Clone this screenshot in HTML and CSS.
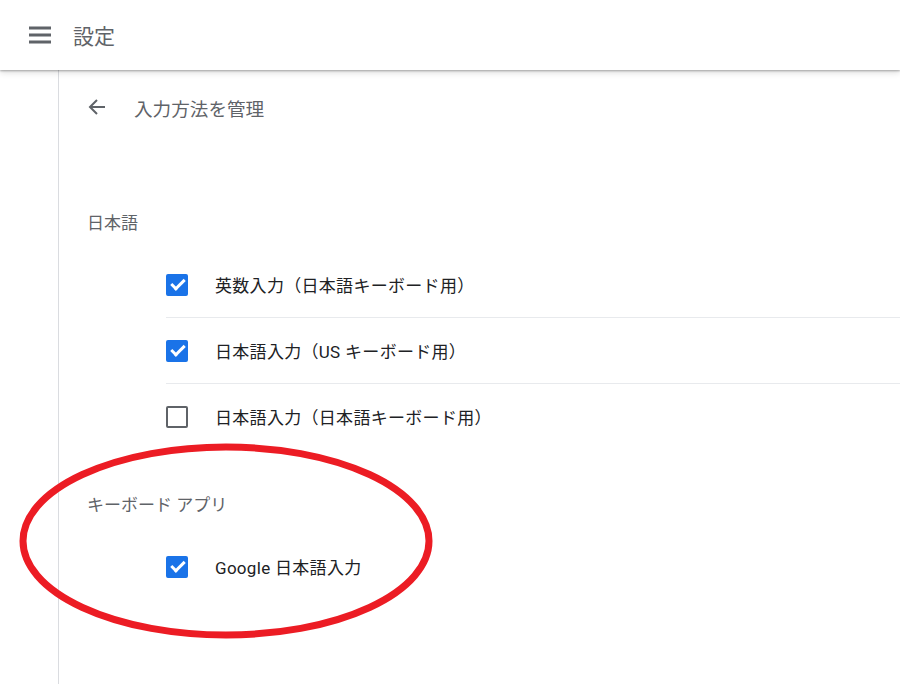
FILE: index.html
```html
<!DOCTYPE html>
<html lang="ja">
<head>
    <meta charset="UTF-8">
    <meta name="viewport" content="width=device-width, initial-scale=1.0">
    <title>設定 - 入力方法を管理</title>
    <link rel="stylesheet" href="styles.css">
</head>
<body>
    <header class="toolbar">
        <svg class="menu-icon" width="24" height="24" viewBox="0 0 24 24">
            <path d="M1 5h22M1 12h22M1 19h22" stroke="#5f6368" stroke-width="2.8" fill="none"/>
        </svg>
        <div class="toolbar-title">設定</div>
    </header>

    <main class="page">
        <div class="subpage-header">
            <svg class="back-icon" width="24" height="24" viewBox="0 0 24 24">
                <path d="M20 12H5.5M12 5l-7 7 7 7" stroke="#5f6368" stroke-width="2" fill="none"/>
            </svg>
            <div class="subpage-title">入力方法を管理</div>
        </div>

        <section class="group">
            <div class="group-title">日本語</div>
            <div class="item-list">
                <div class="item">
                    <span class="checkbox checked"></span>
                    <span class="item-label">英数入力（日本語キーボード用）</span>
                </div>
                <div class="item">
                    <span class="checkbox checked"></span>
                    <span class="item-label">日本語入力（US キーボード用）</span>
                </div>
                <div class="item">
                    <span class="checkbox"></span>
                    <span class="item-label">日本語入力（日本語キーボード用）</span>
                </div>
            </div>
        </section>

        <section class="group group-apps">
            <div class="group-title">キーボード アプリ</div>
            <div class="item-list">
                <div class="item">
                    <span class="checkbox checked"></span>
                    <span class="item-label">Google 日本語入力</span>
                </div>
            </div>
        </section>
    </main>

    <!-- annotation drawn over the screenshot -->
    <svg class="highlight" width="420" height="200" viewBox="0 0 420 200">
        <ellipse cx="210" cy="100" rx="203" ry="94" stroke="#ec1c24" stroke-width="7" fill="none"/>
    </svg>
</body>
</html>
```

FILE: styles.css
```css
body {
    margin: 0;
    font-family: Roboto, "Noto Sans CJK JP", sans-serif;
    background: #fff;
    color: #202124;
    height: 684px;
    overflow: hidden;
    position: relative;
}
.toolbar {
    height: 70px;
    display: flex;
    align-items: center;
    padding-left: 28px;
    box-shadow: 0 1px 2px rgba(0,0,0,0.3), 0 3px 6px rgba(0,0,0,0.12);
    position: relative;
    z-index: 1;
}
.menu-icon {
    margin-right: 21px;
}
.toolbar-title {
    font-size: 21px;
    color: #5f6368;
}
.page {
    margin-left: 58px;
    border-left: 1px solid #dadce0;
    height: 614px;
}
.subpage-header {
    height: 74px;
    display: flex;
    align-items: center;
    padding-left: 26px;
}
.back-icon {
    margin-right: 25px;
}
.subpage-title {
    font-size: 18.6px;
    color: #5f6368;
}
.group {
    padding-top: 67px;
}
.group-apps {
    padding-top: 44px;
}
.group-title {
    font-size: 17px;
    line-height: 24px;
    color: #5f6368;
    padding-left: 28px;
    margin-bottom: 17px;
}
.item-list {
    margin-left: 107px;
}
.item {
    height: 65px;
    display: flex;
    align-items: center;
    border-bottom: 1px solid #e8eaed;
}
.item:last-child {
    border-bottom: none;
}
.checkbox {
    width: 18px;
    height: 18px;
    border: 2px solid #5f6368;
    border-radius: 2px;
    margin-right: 27px;
    position: relative;
    box-sizing: content-box;
}
.checkbox.checked {
    background: #1a73e8;
    border-color: #1a73e8;
}
.checkbox.checked::after {
    content: "";
    position: absolute;
    left: 5.5px;
    top: 0.5px;
    width: 5px;
    height: 11px;
    border: solid #fff;
    border-width: 0 3px 3px 0;
    transform: rotate(45deg);
}
.item-label {
    font-size: 17px;
    letter-spacing: 0.3px;
    color: #202124;
}
.highlight {
    position: absolute;
    left: 16px;
    top: 441px;
}
```
